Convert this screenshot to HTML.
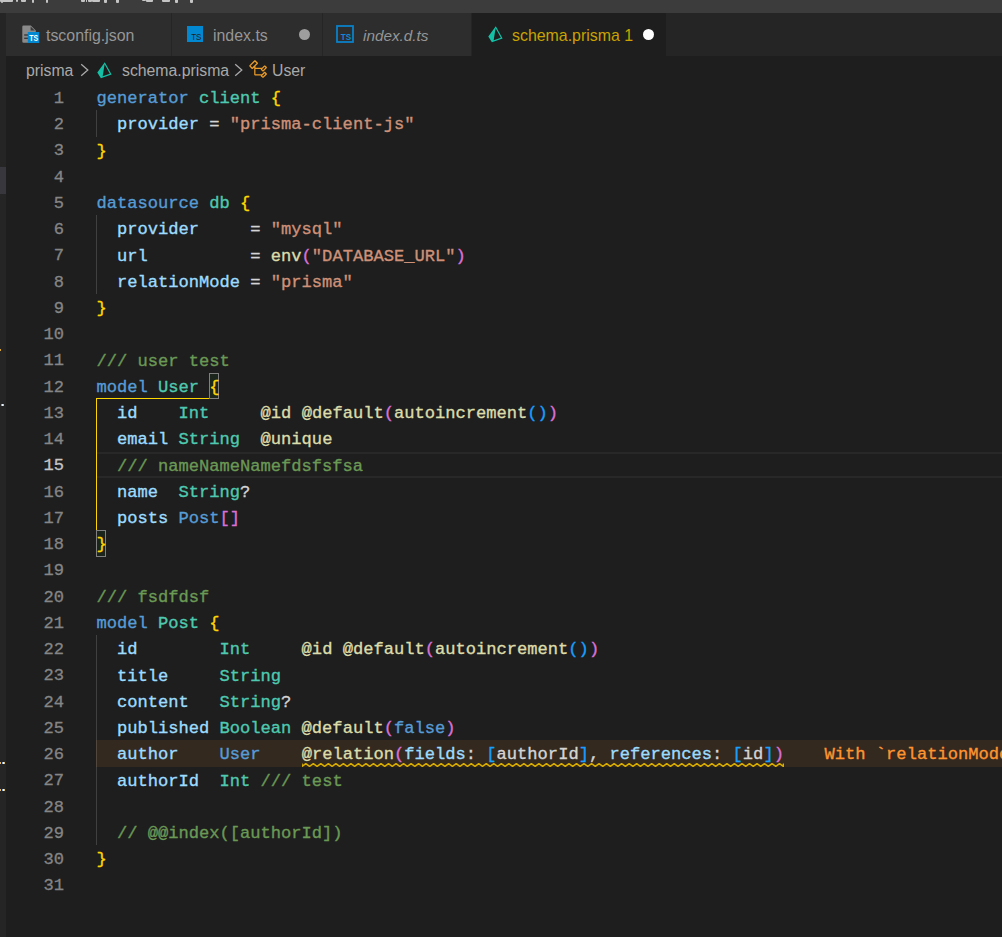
<!DOCTYPE html><html><head><meta charset="utf-8"><style>
*{margin:0;padding:0;box-sizing:border-box}
html,body{width:1002px;height:937px;overflow:hidden;background:#1e1e1e}
body{position:relative;font-family:"Liberation Sans",sans-serif}
.abs{position:absolute}
#title{position:absolute;left:0;top:0;width:1002px;height:13px;background:#3c3c3c;overflow:hidden}
#strip{position:absolute;left:0;top:13px;width:6px;height:924px;background:#252526}
#tabs{position:absolute;left:6px;top:13px;width:996px;height:43px;background:#252526}
.tab{position:absolute;top:13px;height:43px;background:#2d2d2d;border-right:1px solid #252526}
.tab .t{position:absolute;top:1px;line-height:43px;font-size:15.9px;color:#969696;white-space:pre}
.crumb{position:absolute;top:57.2px;line-height:28px;font-size:15.8px;color:#a9a9a9;white-space:pre}
.ln{position:absolute;left:96.40px;height:26.25px;line-height:26.25px;font-family:"Liberation Mono",monospace;font-size:17.1px;white-space:pre;color:#d4d4d4;padding-top:2.2px;-webkit-text-stroke:0.35px currentColor}
.num{position:absolute;left:0;width:64px;text-align:right;height:26.25px;line-height:26.25px;font-family:"Liberation Mono",monospace;font-size:17.1px;color:#858585;padding-top:1.8px;-webkit-text-stroke:0.3px currentColor}
.num.act{color:#c6c6c6}
.kw{color:#569cd6} .ty{color:#4ec9b0} .b1{color:#ffd700} .b2{color:#da70d6} .b3{color:#179fff}
.pr{color:#9cdcfe} .op{color:#d4d4d4} .st{color:#ce9178} .fn{color:#dcdcaa} .cm{color:#6a9955} .ref{color:#569cd6}
.guide{position:absolute;width:1px;background:#404040}
.dot{position:absolute;top:15.5px;width:11px;height:11px;border-radius:50%}
</style></head><body>
<div id="title"><div class="abs" style="left:0px;top:0;width:13px;height:2.0px;background:#c4c4c4;border-radius:0 0 1px 1px"></div><div class="abs" style="left:1px;top:0;width:2px;height:2.6px;background:#c4c4c4;border-radius:0 0 1px 1px"></div><div class="abs" style="left:16px;top:0;width:2px;height:1.5px;background:#c4c4c4;border-radius:0 0 1px 1px"></div><div class="abs" style="left:21px;top:0;width:5px;height:2.0px;background:#c4c4c4;border-radius:0 0 1px 1px"></div><div class="abs" style="left:32.3px;top:0;width:2.200000000000003px;height:2.8px;background:#c4c4c4;border-radius:0 0 1px 1px"></div><div class="abs" style="left:45.5px;top:0;width:2.299999999999997px;height:2.8px;background:#c4c4c4;border-radius:0 0 1px 1px"></div><div class="abs" style="left:81px;top:0;width:4px;height:1.5px;background:#c4c4c4;border-radius:0 0 1px 1px"></div><div class="abs" style="left:85.5px;top:0;width:1.5px;height:1.5px;background:#c4c4c4;border-radius:0 0 1px 1px"></div><div class="abs" style="left:88px;top:0;width:4px;height:2.0px;background:#c4c4c4;border-radius:0 0 1px 1px"></div><div class="abs" style="left:92px;top:0;width:8px;height:1.8px;background:#c4c4c4;border-radius:0 0 1px 1px"></div><div class="abs" style="left:103.5px;top:0;width:3.0px;height:2.8px;background:#c4c4c4;border-radius:0 0 1px 1px"></div><div class="abs" style="left:115.5px;top:0;width:3.0px;height:2.8px;background:#c4c4c4;border-radius:0 0 1px 1px"></div><div class="abs" style="left:142px;top:0;width:4px;height:1.0px;background:#c4c4c4;border-radius:0 0 1px 1px"></div><div class="abs" style="left:146px;top:0;width:7px;height:1.5px;background:#c4c4c4;border-radius:0 0 1px 1px"></div><div class="abs" style="left:162px;top:0;width:8px;height:1.5px;background:#c4c4c4;border-radius:0 0 1px 1px"></div><div class="abs" style="left:175px;top:0;width:3px;height:2.6px;background:#c4c4c4;border-radius:0 0 1px 1px"></div><div class="abs" style="left:189.5px;top:0;width:3.0px;height:2.8px;background:#c4c4c4;border-radius:0 0 1px 1px"></div></div>
<div id="strip"></div>
<div class="abs" style="left:0;top:167px;width:5.5px;height:27px;background:#37373d"></div>
<div class="abs" style="left:0px;top:349px;width:1.3px;height:2.4px;background:#d9a533"></div>
<div class="abs" style="left:1px;top:403.5px;width:3px;height:2.7px;background:linear-gradient(90deg,#3b6fd0,#e8f0f8,#d9a533)"></div>
<div class="abs" style="left:0px;top:761.8px;width:1.2px;height:2.4px;background:#e0b070"></div>
<div class="abs" style="left:1.9px;top:761.8px;width:3.3px;height:2.4px;background:linear-gradient(90deg,#3b7ad5,#f0f4f8,#d9a533)"></div>
<div class="abs" style="left:0px;top:789px;width:1.2px;height:2.3px;background:#e0b070"></div>
<div class="abs" style="left:1.9px;top:789px;width:3.3px;height:2.3px;background:linear-gradient(90deg,#3b7ad5,#f0f4f8,#d9a533)"></div>
<div id="tabs"></div>
<div class="tab" style="left:6px;width:166px"><span class="t" style="left:40px">tsconfig.json</span></div>
<svg class="abs" style="left:22px;top:25px" width="18" height="19" viewBox="0 0 18 19"><path fill="#8a8a8a" d="M1.5 0.5 H8.8 L13.8 5.5 V7 H6 V17.7 H1.5 Q0.3 17.7 0.3 16.5 V1.7 Q0.3 0.5 1.5 0.5 Z"/><path fill="#3a3a3a" d="M8.6 1.6 L12.8 5.6 H8.6 Z"/><rect x="2.2" y="9.3" width="3.8" height="1.4" fill="#3a3a3a"/><rect x="2.2" y="12.6" width="3.8" height="1.4" fill="#3a3a3a"/><rect x="5.8" y="7" width="11.4" height="11" fill="#0288d1"/><text x="7.2" y="15.7" textLength="8.9" lengthAdjust="spacingAndGlyphs" font-family="Liberation Sans" font-weight="bold" font-size="8.4" fill="#ffffff">TS</text></svg>
<div class="tab" style="left:172px;width:151px"><span class="t" style="left:41px">index.ts</span><div class="dot" style="left:126.5px;background:#9d9d9d"></div></div>
<svg class="abs" style="left:187px;top:26px" width="16" height="16" viewBox="0 0 16 16"><rect x="0" y="0" width="16" height="16" fill="#0288d1"/><text x="4.2" y="14.2" textLength="10.3" lengthAdjust="spacingAndGlyphs" font-family="Liberation Sans" font-size="9.2" fill="#202020">TS</text></svg>
<div class="tab" style="left:323px;width:149px"><span class="t" style="left:40px;font-style:italic;font-size:15.3px">index.d.ts</span></div>
<svg class="abs" style="left:336px;top:25px" width="18" height="18" viewBox="0 0 18 18"><rect x="1" y="1" width="16" height="16" fill="none" stroke="#0a80c8" stroke-width="1.8"/><text x="4.8" y="15.2" textLength="10.4" lengthAdjust="spacingAndGlyphs" font-family="Liberation Sans" font-weight="bold" font-size="9.2" fill="#0a8ad6">TS</text></svg>
<div class="tab" style="left:472px;width:194px;background:#1e1e1e;border-right:none"><span class="t" style="left:40px;color:#c9a300">schema.prisma 1</span><div class="dot" style="left:171px;background:#ffffff"></div></div>
<svg class="abs" style="left:487.6px;top:25.5px" width="16" height="18" viewBox="0 0 16 18"><path fill="#14c0a6" fill-rule="evenodd" d="M7.8 0.3 L0.3 10.6 L3.9 16.3 L14.6 12.6 Z M7.59 2.19 L5.68 14.13 L12.85 11.71 Z"/></svg>
<span class="crumb" style="left:26px">prisma</span>
<svg class="abs" style="left:80px;top:63px" width="10" height="14" viewBox="0 0 10 14"><path d="M1.2 1.2 L7.8 7 L1.2 12.8" fill="none" stroke="#a9a9a9" stroke-width="1.3"/></svg>
<svg class="abs" style="left:96.6px;top:61.7px" width="16" height="18" viewBox="0 0 16 18"><path fill="#14c0a6" fill-rule="evenodd" d="M7.8 0.3 L0.3 10.6 L3.9 16.3 L14.6 12.6 Z M7.59 2.19 L5.68 14.13 L12.85 11.71 Z"/></svg>
<span class="crumb" style="left:122px">schema.prisma</span>
<svg class="abs" style="left:234px;top:63px" width="10" height="14" viewBox="0 0 10 14"><path d="M1.2 1.2 L7.8 7 L1.2 12.8" fill="none" stroke="#a9a9a9" stroke-width="1.3"/></svg>
<svg class="abs" style="left:248px;top:58.5px" width="20.5" height="20.5" viewBox="0 0 16 16"><path fill="#ee9d28" d="M11.34 9.71h.71l2.67-2.67v-.71L13.38 5h-.7l-1.82 1.81h-5V5.56l1.86-1.85V3l-2-2H5L1 5v.71l2 2h.71l1.14-1.15v5.79l.5.5H10v.52l1.33 1.34h.71l2.67-2.670v-.71L13.37 10h-.7l-1.86 1.85h-5v-4H10v.48l1.34 1.38zm1.690-3.650l.63.63-2 2-.63-.63 2-2zm0 5l.63.63-2 2-.63-.63 2-2zM3.35 6.65l-1.29-1.3 3.29-3.29 1.3 1.29-3.3 3.3z"/></svg>
<span class="crumb" style="left:272px">User</span>
<div class="abs" style="left:97px;top:452.00px;width:905px;height:25.75px;border-top:2px solid #282828;border-bottom:2px solid #282828"></div>
<div class="guide" style="left:96px;top:110.25px;height:26.25px"></div>
<div class="guide" style="left:96px;top:215.25px;height:78.75px"></div>
<div class="guide" style="left:96px;top:635.25px;height:210.00px"></div>
<div class="abs" style="left:96px;top:739.9px;width:906px;height:27px;background:rgba(255,148,47,0.1)"></div>
<div class="abs" style="left:96px;top:398.00px;width:1.3px;height:132.25px;background:#ffd700"></div>
<div class="abs" style="left:96px;top:398.00px;width:113.40px;height:1.3px;background:#ffd700"></div>
<div class="abs" style="left:209px;top:372.75px;width:10px;height:26.25px;border:1px solid #808080;background:#1b251b"></div>
<div class="abs" style="left:96px;top:530.25px;width:10px;height:26.25px;border:1px solid #808080;background:#1b251b"></div>
<div class="num" style="top:84.00px">1</div>
<div class="num" style="top:110.25px">2</div>
<div class="num" style="top:136.50px">3</div>
<div class="num" style="top:162.75px">4</div>
<div class="num" style="top:189.00px">5</div>
<div class="num" style="top:215.25px">6</div>
<div class="num" style="top:241.50px">7</div>
<div class="num" style="top:267.75px">8</div>
<div class="num" style="top:294.00px">9</div>
<div class="num" style="top:320.25px">10</div>
<div class="num" style="top:346.50px">11</div>
<div class="num" style="top:372.75px">12</div>
<div class="num" style="top:399.00px">13</div>
<div class="num" style="top:425.25px">14</div>
<div class="num act" style="top:451.50px">15</div>
<div class="num" style="top:477.75px">16</div>
<div class="num" style="top:504.00px">17</div>
<div class="num" style="top:530.25px">18</div>
<div class="num" style="top:556.50px">19</div>
<div class="num" style="top:582.75px">20</div>
<div class="num" style="top:609.00px">21</div>
<div class="num" style="top:635.25px">22</div>
<div class="num" style="top:661.50px">23</div>
<div class="num" style="top:687.75px">24</div>
<div class="num" style="top:714.00px">25</div>
<div class="num" style="top:740.25px">26</div>
<div class="num" style="top:766.50px">27</div>
<div class="num" style="top:792.75px">28</div>
<div class="num" style="top:819.00px">29</div>
<div class="num" style="top:845.25px">30</div>
<div class="num" style="top:871.50px">31</div>
<div class="ln" style="top:84.00px"><span class="kw">generator</span> <span class="ty">client</span> <span class="b1">{</span></div>
<div class="ln" style="top:110.25px">  <span class="pr">provider</span><span class="op"> = </span><span class="st">&quot;prisma-client-js&quot;</span></div>
<div class="ln" style="top:136.50px"><span class="b1">}</span></div>
<div class="ln" style="top:162.75px"></div>
<div class="ln" style="top:189.00px"><span class="kw">datasource</span> <span class="ty">db</span> <span class="b1">{</span></div>
<div class="ln" style="top:215.25px">  <span class="pr">provider</span><span class="op">     = </span><span class="st">&quot;mysql&quot;</span></div>
<div class="ln" style="top:241.50px">  <span class="pr">url</span><span class="op">          = </span><span class="fn">env</span><span class="b2">(</span><span class="st">&quot;DATABASE_URL&quot;</span><span class="b2">)</span></div>
<div class="ln" style="top:267.75px">  <span class="pr">relationMode</span><span class="op"> = </span><span class="st">&quot;prisma&quot;</span></div>
<div class="ln" style="top:294.00px"><span class="b1">}</span></div>
<div class="ln" style="top:320.25px"></div>
<div class="ln" style="top:346.50px"><span class="cm">/// user test</span></div>
<div class="ln" style="top:372.75px"><span class="kw">model</span> <span class="ty">User</span> <span class="b1">{</span></div>
<div class="ln" style="top:399.00px">  <span class="pr">id</span>    <span class="ty">Int</span>     <span class="fn">@id</span> <span class="fn">@default</span><span class="b2">(</span><span class="fn">autoincrement</span><span class="b3">()</span><span class="b2">)</span></div>
<div class="ln" style="top:425.25px">  <span class="pr">email</span> <span class="ty">String</span>  <span class="fn">@unique</span></div>
<div class="ln" style="top:451.50px">  <span class="cm">/// nameNameNamefdsfsfsa</span></div>
<div class="ln" style="top:477.75px">  <span class="pr">name</span>  <span class="ty">String</span><span class="op">?</span></div>
<div class="ln" style="top:504.00px">  <span class="pr">posts</span> <span class="ref">Post</span><span class="b2">[]</span></div>
<div class="ln" style="top:530.25px"><span class="b1">}</span></div>
<div class="ln" style="top:556.50px"></div>
<div class="ln" style="top:582.75px"><span class="cm">/// fsdfdsf</span></div>
<div class="ln" style="top:609.00px"><span class="kw">model</span> <span class="ty">Post</span> <span class="b1">{</span></div>
<div class="ln" style="top:635.25px">  <span class="pr">id</span>        <span class="ty">Int</span>     <span class="fn">@id</span> <span class="fn">@default</span><span class="b2">(</span><span class="fn">autoincrement</span><span class="b3">()</span><span class="b2">)</span></div>
<div class="ln" style="top:661.50px">  <span class="pr">title</span>     <span class="ty">String</span></div>
<div class="ln" style="top:687.75px">  <span class="pr">content</span>   <span class="ty">String</span><span class="op">?</span></div>
<div class="ln" style="top:714.00px">  <span class="pr">published</span> <span class="ty">Boolean</span> <span class="fn">@default</span><span class="b2">(</span><span class="kw">false</span><span class="b2">)</span></div>
<div class="ln" style="top:740.25px">  <span class="pr">author</span>    <span class="ref">User</span>    <span class="fn">@relation</span><span class="b2">(</span><span class="pr">fields</span><span class="op">: </span><span class="b3">[</span><span class="op">authorId</span><span class="b3">]</span><span class="op">, </span><span class="pr">references</span><span class="op">: </span><span class="b3">[</span><span class="op">id</span><span class="b3">]</span><span class="b2">)</span></div>
<div class="ln" style="top:766.50px">  <span class="pr">authorId</span>  <span class="ty">Int</span> <span class="cm">/// test</span></div>
<div class="ln" style="top:792.75px"></div>
<div class="ln" style="top:819.00px">  <span class="cm">// @@index([authorId])</span></div>
<div class="ln" style="top:845.25px"><span class="b1">}</span></div>
<div class="ln" style="top:871.50px"></div>
<svg class="abs" style="left:302px;top:763px" width="482" height="4"><polyline points="0.00,3.4 0.00,0.6 0.04,3.4 3.80,0.6 7.56,3.4 11.32,0.6 15.08,3.4 18.84,0.6 22.60,3.4 26.36,0.6 30.12,3.4 33.88,0.6 37.64,3.4 41.40,0.6 45.16,3.4 48.92,0.6 52.68,3.4 56.44,0.6 60.20,3.4 63.96,0.6 67.72,3.4 71.48,0.6 75.24,3.4 79.00,0.6 82.76,3.4 86.52,0.6 90.28,3.4 94.04,0.6 97.80,3.4 101.56,0.6 105.32,3.4 109.08,0.6 112.84,3.4 116.60,0.6 120.36,3.4 124.12,0.6 127.88,3.4 131.64,0.6 135.40,3.4 139.16,0.6 142.92,3.4 146.68,0.6 150.44,3.4 154.20,0.6 157.96,3.4 161.72,0.6 165.48,3.4 169.24,0.6 173.00,3.4 176.76,0.6 180.52,3.4 184.28,0.6 188.04,3.4 191.80,0.6 195.56,3.4 199.32,0.6 203.08,3.4 206.84,0.6 210.60,3.4 214.36,0.6 218.12,3.4 221.88,0.6 225.64,3.4 229.40,0.6 233.16,3.4 236.92,0.6 240.68,3.4 244.44,0.6 248.20,3.4 251.96,0.6 255.72,3.4 259.48,0.6 263.24,3.4 267.00,0.6 270.76,3.4 274.52,0.6 278.28,3.4 282.04,0.6 285.80,3.4 289.56,0.6 293.32,3.4 297.08,0.6 300.84,3.4 304.60,0.6 308.36,3.4 312.12,0.6 315.88,3.4 319.64,0.6 323.40,3.4 327.16,0.6 330.92,3.4 334.68,0.6 338.44,3.4 342.20,0.6 345.96,3.4 349.72,0.6 353.48,3.4 357.24,0.6 361.00,3.4 364.76,0.6 368.52,3.4 372.28,0.6 376.04,3.4 379.80,0.6 383.56,3.4 387.32,0.6 391.08,3.4 394.84,0.6 398.60,3.4 402.36,0.6 406.12,3.4 409.88,0.6 413.64,3.4 417.40,0.6 421.16,3.4 424.92,0.6 428.68,3.4 432.44,0.6 436.20,3.4 439.96,0.6 443.72,3.4 447.48,0.6 451.24,3.4 455.00,0.6 458.76,3.4 462.52,0.6 466.28,3.4 470.04,0.6 473.80,3.4 477.56,0.6 481.32,3.4 481.50,0.6 481.50,3.4" fill="none" stroke="#d9ad00" stroke-width="1.5" stroke-linejoin="miter"/></svg>
<div class="ln" style="top:740.25px;left:824.57px;color:#ff942f">With `relationMode = "prisma"`, no foreign keys are used</div>
</body></html>
